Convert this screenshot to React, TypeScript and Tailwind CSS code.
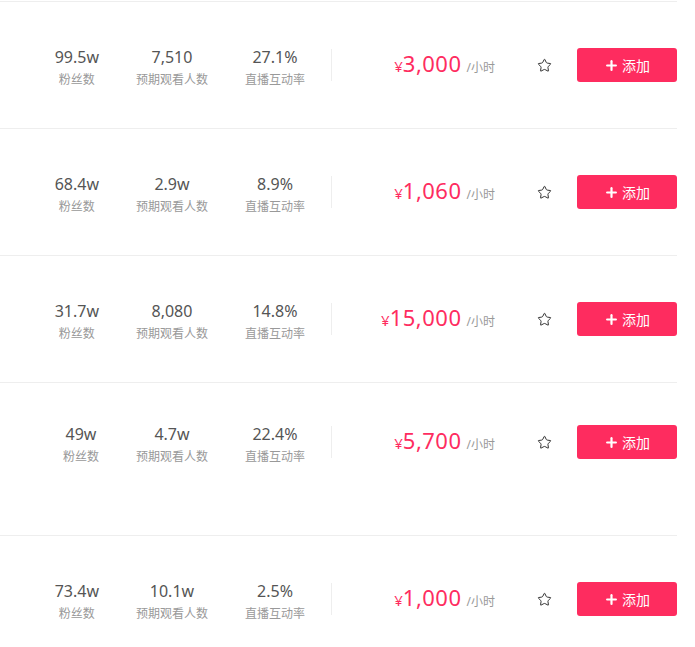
import { Plus, Star } from 'lucide-react'

interface Row {
  fans: string
  viewers: string
  rate: string
  price: string
  pad: string
}

const rows: Row[] = [
  { fans: '99.5w', viewers: '7,510', rate: '27.1%', price: '3,000', pad: 'pt-[46px] pb-[46px]' },
  { fans: '68.4w', viewers: '2.9w', rate: '8.9%', price: '1,060', pad: 'pt-[46px] pb-[46px]' },
  { fans: '31.7w', viewers: '8,080', rate: '14.8%', price: '15,000', pad: 'pt-[46px] pb-[46px]' },
  { fans: '49w', viewers: '4.7w', rate: '22.4%', price: '5,700', pad: 'pt-[42px] pb-[76px]' },
  { fans: '73.4w', viewers: '10.1w', rate: '2.5%', price: '1,000', pad: 'pt-[46px] pb-[46px]' },
]

function Stat({ value, label }: { value: string; label: string }) {
  return (
    <div className="flex flex-col items-center mt-[5px]">
      <span className="text-[16px] leading-[24px] text-[#555]">{value}</span>
      <span className="mt-[1px] text-[12px] leading-[20px] text-[#999]">{label}</span>
    </div>
  )
}

function AnchorRow({ row }: { row: Row }) {
  return (
    <div className={`flex items-center w-[677px] border-b border-[#eeeeee] ${row.pad}`}>
      <div className="w-[305px] h-[34px] flex items-center justify-end gap-[37px]">
        <Stat value={row.fans} label="粉丝数" />
        <Stat value={row.viewers} label="预期观看人数" />
        <Stat value={row.rate} label="直播互动率" />
      </div>
      <div className="ml-[26px] w-px h-8 bg-[#eeeeee]" />
      <div className="flex-1 h-[34px] flex justify-end items-baseline pt-[1px]">
        <span className="text-[15px] leading-[28px] text-[#fe2c5f]">¥</span>
        <span className="text-[22px] leading-[28px] tracking-[0.5px] text-[#fe2c5f]">{row.price}</span>
        <span className="ml-[5px] text-[12px] leading-[28px] text-[#999]">/小时</span>
      </div>
      <Star className="ml-[42px] w-[15px] h-[15px] text-[#333]" strokeWidth={1.6} />
      <button className="ml-[25px] w-[100px] h-[34px] rounded-[3px] bg-[#fe2c5f] text-white text-[14px] flex items-center justify-center gap-[3px]">
        <Plus className="w-[15px] h-[15px]" strokeWidth={3.5} />
        <span>添加</span>
      </button>
    </div>
  )
}

export default function App() {
  return (
    <div
      className="w-[695px] h-[647px] overflow-hidden bg-white pt-px"
      style={{ fontFamily: '"Noto Sans", "Noto Sans CJK SC", sans-serif' }}
    >
      <div className="w-[677px] border-t border-[#eeeeee]" />
      {rows.map((r, i) => (
        <AnchorRow key={i} row={r} />
      ))}
    </div>
  )
}
